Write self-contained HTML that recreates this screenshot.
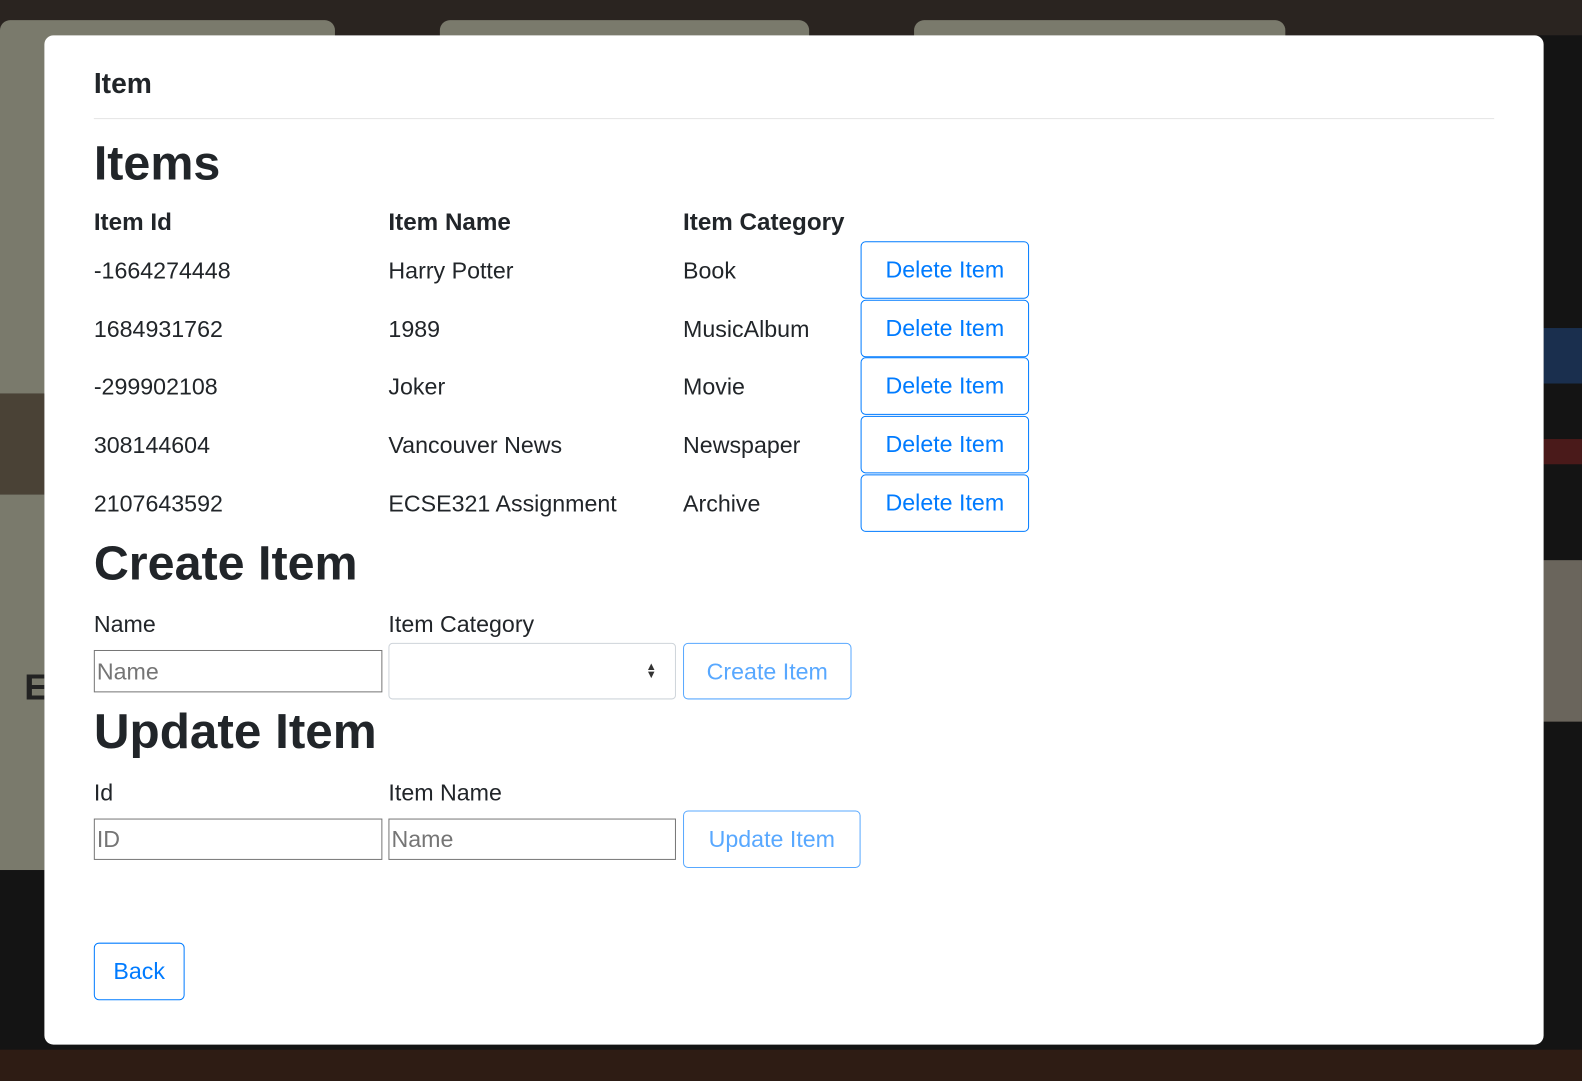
<!DOCTYPE html>
<html><head><meta charset="utf-8"><style>
html,body{margin:0;padding:0;width:1582px;height:1081px;overflow:hidden;background:#141414;font-family:"Liberation Sans",sans-serif;}
#w{position:absolute;left:0;top:0;width:1568px;height:1071px;transform:scale(1.0089,1.0093);transform-origin:0 0;}
.a{position:absolute}
.t{position:absolute;color:#212529;font-size:23px;line-height:1;white-space:nowrap}
.btn{position:absolute;border:1px solid #007bff;border-radius:5px;color:#007bff;font-size:23px;display:flex;align-items:center;justify-content:center;background:#fff;box-sizing:border-box}
.dis{opacity:.65}
.in{position:absolute;border:1px solid #767676;box-sizing:border-box;background:#fff;color:#757575;font-size:23px;display:flex;align-items:center;padding-left:2px}
h{position:absolute;font-weight:bold;color:#212529;white-space:nowrap;line-height:1}
</style></head><body><div id="w">
<div class="a" style="left:0;top:0;width:1568px;height:35px;background:#2a2420"></div>
<div class="a" style="left:0;top:20px;width:332px;height:370px;background:#7a7a6c;border-radius:10px 10px 0 0"></div>
<div class="a" style="left:436px;top:20px;width:366px;height:30px;background:#7a7a6c;border-radius:10px 10px 0 0"></div>
<div class="a" style="left:906px;top:20px;width:368px;height:30px;background:#7a7a6c;border-radius:10px 10px 0 0"></div>
<div class="a" style="left:0;top:390px;width:44px;height:100px;background:#4a4236"></div>
<div class="a" style="left:0;top:490px;width:44px;height:372px;background:#7a7a6c"></div>
<div class="a" style="left:24px;top:660px;font-size:36px;font-weight:bold;color:#222;font-family:'Liberation Sans'">E</div>
<div class="a" style="left:1530px;top:325px;width:38px;height:55px;background:#1a2f4e"></div>
<div class="a" style="left:1530px;top:435px;width:38px;height:25px;background:#4a1a1a"></div>
<div class="a" style="left:1530px;top:555px;width:38px;height:160px;background:#6a655c"></div>
<div class="a" style="left:0;top:1040px;width:1568px;height:31px;background:#2e1c14"></div>
<div class="a" style="left:44px;top:35px;width:1486px;height:1000px;background:#fff;border-radius:9px"></div>
<h style="left:93px;top:69px;font-size:28px">Item</h>
<div class="a" style="left:93px;top:117px;width:1388px;height:1px;background:#e5e5e5"></div>
<h style="left:93px;top:139px;font-size:48px;font-weight:600">Items</h>
<h style="left:93px;top:209px;font-size:24px">Item Id</h>
<h style="left:385px;top:209px;font-size:24px">Item Name</h>
<h style="left:677px;top:209px;font-size:24px">Item Category</h>
<div class="t" style="left:93px;top:257px">-1664274448</div><div class="t" style="left:385px;top:257px">Harry Potter</div><div class="t" style="left:677px;top:257px">Book</div>
<div class="t" style="left:93px;top:315px">1684931762</div><div class="t" style="left:385px;top:315px">1989</div><div class="t" style="left:677px;top:315px">MusicAlbum</div>
<div class="t" style="left:93px;top:372px">-299902108</div><div class="t" style="left:385px;top:372px">Joker</div><div class="t" style="left:677px;top:372px">Movie</div>
<div class="t" style="left:93px;top:430px">308144604</div><div class="t" style="left:385px;top:430px">Vancouver News</div><div class="t" style="left:677px;top:430px">Newspaper</div>
<div class="t" style="left:93px;top:488px">2107643592</div><div class="t" style="left:385px;top:488px">ECSE321 Assignment</div><div class="t" style="left:677px;top:488px">Archive</div>
<div class="btn" style="left:853px;top:239px;width:167px;height:57px">Delete Item</div>
<div class="btn" style="left:853px;top:297px;width:167px;height:57px">Delete Item</div>
<div class="btn" style="left:853px;top:354px;width:167px;height:57px">Delete Item</div>
<div class="btn" style="left:853px;top:412px;width:167px;height:57px">Delete Item</div>
<div class="btn" style="left:853px;top:470px;width:167px;height:57px">Delete Item</div>
<h style="left:93px;top:535px;font-size:48px;font-weight:600">Create Item</h>
<div class="t" style="left:93px;top:607px">Name</div>
<div class="t" style="left:385px;top:607px">Item Category</div>
<div class="in" style="left:93px;top:644px;width:286px;height:42px">Name</div>
<div class="a" style="left:385px;top:637px;width:285px;height:56px;border:1px solid #ced4da;border-radius:4px;box-sizing:border-box"><span style="position:absolute;right:18px;top:19px;font-size:11px;line-height:8px;color:#333">▲<br>▼</span></div>
<div class="btn dis" style="left:677px;top:637px;width:167px;height:56px">Create Item</div>
<h style="left:93px;top:701px;font-size:49px;font-weight:600">Update Item</h>
<div class="t" style="left:93px;top:774px">Id</div>
<div class="t" style="left:385px;top:774px">Item Name</div>
<div class="in" style="left:93px;top:811px;width:286px;height:41px">ID</div>
<div class="in" style="left:385px;top:811px;width:285px;height:41px">Name</div>
<div class="btn dis" style="left:677px;top:803px;width:176px;height:57px">Update Item</div>
<div class="btn" style="left:93px;top:934px;width:90px;height:57px">Back</div>
</div></body></html>
